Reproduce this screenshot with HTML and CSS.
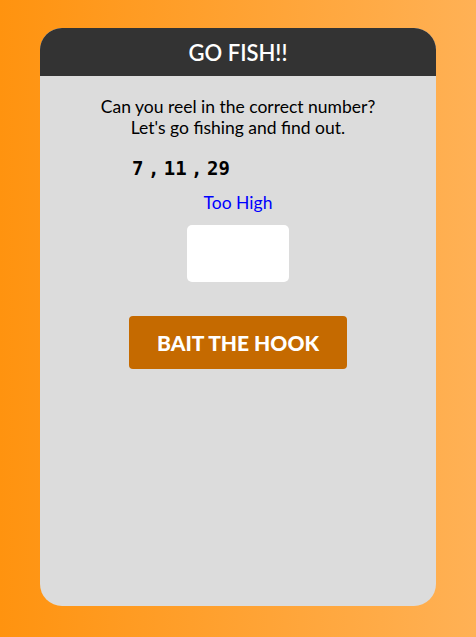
FILE: index.html
```html
<!DOCTYPE html>
<html>
<head>
<meta charset="utf-8">
<link rel="stylesheet" href="styles.css">
</head>
<body>
<div class="card">
  <header class="head">GO FISH!!</header>
  <main class="body">
    <p class="intro">Can you reel in the correct number?<br>Let's go fishing and find out.</p>
    <div class="guesses">7 , 11 , 29</div>
    <div class="hint">Too High</div>
    <input class="guess" type="text">
    <button class="bait">BAIT THE HOOK</button>
  </main>
</div>
</body>
</html>
```
FILE: styles.css
```css
html, body { margin: 0; height: 100%; }
body {
  background: linear-gradient(to right, #ff930f, #ffb155);
  font-family: Lato, "Noto Sans", sans-serif;
  padding: 28px 40px 31px;
  box-sizing: border-box;
}
.card {
  height: 578px;
  background: #dcdcdc;
  border-radius: 22px;
  overflow: hidden;
  display: flex;
  flex-direction: column;
}
.head {
  height: 48px;
  flex: none;
  background: #333333;
  color: #fff;
  font-size: 22px;
  font-weight: 600;
  display: flex;
  align-items: center;
  justify-content: center;
}
.body {
  display: flex;
  flex-direction: column;
  align-items: center;
}
.intro {
  margin: 20px 0 0;
  text-align: center;
  font-size: 17.5px;
  line-height: 21px;
  color: #000;
}
.guesses {
  align-self: flex-start;
  margin: 18px 0 0 92px;
  font-family: "DejaVu Sans Mono", monospace;
  font-weight: bold;
  font-size: 19px;
  line-height: 24px;
  word-spacing: -7px;
}
.hint {
  margin-top: 12px;
  color: #0000ff;
  font-size: 17.5px;
  line-height: 21px;
}
.guess {
  margin-top: 12px;
  width: 102px;
  height: 57px;
  box-sizing: border-box;
  border: none;
  border-radius: 5px;
  background: #fff;
  outline: none;
}
.bait {
  margin-top: 34px;
  width: 218px;
  height: 53px;
  border: none;
  border-radius: 4px;
  background: #c56a00;
  color: #fff;
  font-family: Lato, sans-serif;
  font-weight: 900;
  font-size: 21px;
}
```
